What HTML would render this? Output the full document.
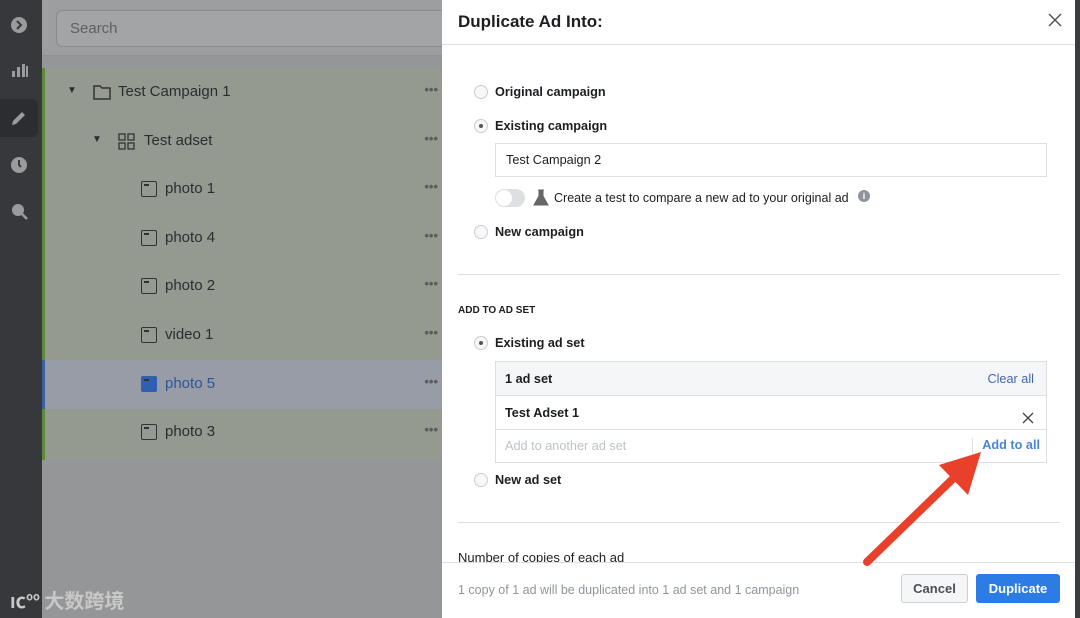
<!DOCTYPE html>
<html><head><meta charset="utf-8"><style>
*{box-sizing:border-box;margin:0;padding:0}
body{width:1080px;height:618px;overflow:hidden;position:relative;font-family:"Liberation Sans",Helvetica,Arial,sans-serif;background:#959697}
.abs{position:absolute}
.side{left:0;top:0;width:42px;height:618px;background:#36383b}
.main{left:42px;top:0;width:400px;height:618px;background:#959697}
.search{left:42px;top:0;width:400px;height:56px;background:#9d9e9f;border-bottom:1px solid #909192}
.sbox{left:56px;top:10px;width:400px;height:37px;border:1px solid #8a8b8c;border-radius:6px;background:#a3a4a5;color:#5e6062;font-size:15px;padding:9px 13px}
.tree{left:42px;top:68px;width:400px;height:392px;background:#959a91;border-left:3px solid #5c8a3a}
.row{position:absolute;left:0;width:397px;height:49px;font-size:15px;color:#2b2d2f}
.row span{position:absolute;top:15px}
.dots{position:absolute;right:4px;top:14px;color:#5a5c5e;font-size:13px;letter-spacing:0}
.ic{position:absolute;top:16px;width:16px;height:16px;border:1.5px solid #333;border-radius:2px}
.ic:after{content:"";position:absolute;left:2px;top:2px;width:5px;height:1.5px;background:#333}
.modal{left:442px;top:0;width:633px;height:618px;background:#fff}
.rb{position:absolute;width:14px;height:14px;border:1px solid #c9ccd1;border-radius:50%;background:#f6f7f9}
.rb.on:after{content:"";position:absolute;left:4px;top:4px;width:4px;height:4px;border-radius:50%;background:#555}
.lbl{position:absolute;font-size:12.7px;font-weight:bold;color:#1c1e21}
.hr{position:absolute;height:1px;background:#dddfe2}
</style></head><body>
<div class="abs side"></div>
<svg class="abs" style="left:10px;top:16px" width="20" height="210" viewBox="0 0 20 210">
<circle cx="9" cy="9" r="8" fill="#9a9b9c"/><path d="M7 5l4 4-4 4" stroke="#36383b" stroke-width="2" fill="none"/>
<rect x="2" y="55" width="3" height="6" fill="#9a9b9c"/><rect x="7" y="51" width="3" height="10" fill="#9a9b9c"/><rect x="12" y="48" width="3" height="13" fill="#9a9b9c"/><rect x="16" y="50" width="2" height="11" fill="#9a9b9c"/>
<circle cx="9" cy="149" r="8" fill="#9a9b9c"/><path d="M9 144v5l2 2" stroke="#36383b" stroke-width="2" fill="none"/>
<circle cx="8" cy="194" r="6" fill="#9a9b9c"/><path d="M12 198l5 5" stroke="#9a9b9c" stroke-width="2.5"/>
</svg>
<div class="abs" style="left:0;top:99px;width:38px;height:38px;background:#2b2d30;border-radius:0 6px 6px 0"></div>
<svg class="abs" style="left:10px;top:109px" width="18" height="18"><path d="M2 16l1-4 9-9 3 3-9 9z" fill="#9a9b9c"/></svg>
<div class="abs main"></div>
<div class="abs search"></div>
<div class="abs sbox">Search</div>
<div class="abs tree">
<div class="row" style="top:0"><span style="left:22px;font-size:10px;top:17px">▼</span><svg style="position:absolute;left:48px;top:16px" width="18" height="16"><path d="M1 2h6l2 2h8v11H1z" fill="none" stroke="#333" stroke-width="1.5"/></svg><span style="left:73px">Test Campaign 1</span><b class="dots">•••</b></div>
<div class="row" style="top:49px"><span style="left:47px;font-size:10px;top:17px">▼</span><svg style="position:absolute;left:73px;top:16px" width="18" height="18"><g fill="none" stroke="#333" stroke-width="1.3"><rect x="1" y="1" width="6" height="6"/><rect x="10" y="1" width="6" height="6"/><rect x="1" y="10" width="6" height="6"/><rect x="10" y="10" width="6" height="6"/></g></svg><span style="left:99px">Test adset</span><b class="dots">•••</b></div>
<div class="row" style="top:97px"><i class="ic" style="left:96px"></i><span style="left:120px">photo 1</span><b class="dots">•••</b></div>
<div class="row" style="top:146px"><i class="ic" style="left:96px"></i><span style="left:120px">photo 4</span><b class="dots">•••</b></div>
<div class="row" style="top:194px"><i class="ic" style="left:96px"></i><span style="left:120px">photo 2</span><b class="dots">•••</b></div>
<div class="row" style="top:243px"><i class="ic" style="left:96px"></i><span style="left:120px">video 1</span><b class="dots">•••</b></div>
<div class="row" style="top:292px;background:#979ca6;left:-3px;width:400px;border-left:3px solid #3d5f9a"><i class="ic" style="left:96px;background:#2f5fb0;border-color:#2f5fb0"></i><span style="left:120px;color:#2f5598">photo 5</span><b class="dots">•••</b></div>
<div class="row" style="top:340px"><i class="ic" style="left:96px"></i><span style="left:120px">photo 3</span><b class="dots">•••</b></div>
</div>
<div class="abs" style="left:10px;top:585px;color:#c8c8c8;font-size:20px;font-family:'Noto Sans CJK SC',sans-serif;font-weight:bold">ıc<sup style="font-size:11px">oo</sup> 大数跨境</div>
<div class="abs" style="left:1075px;top:0;width:5px;height:618px;background:#3a3b3c"></div>
<div class="abs modal">
<div style="position:absolute;left:16px;top:12px;font-size:17px;font-weight:bold;color:#1c1e21">Duplicate Ad Into:</div>
<svg style="position:absolute;left:606px;top:13px" width="14" height="14"><path d="M1 1l12 12M13 1L1 13" stroke="#555" stroke-width="1.5"/></svg>
<div class="hr" style="left:0;top:44px;width:633px"></div>
<i class="rb" style="left:32px;top:85px"></i><div class="lbl" style="left:53px;top:85px">Original campaign</div>
<i class="rb on" style="left:32px;top:119px"></i><div class="lbl" style="left:53px;top:119px">Existing campaign</div>
<div style="position:absolute;left:53px;top:143px;width:552px;height:34px;border:1px solid #dddfe2;font-size:12.7px;color:#1c1e21;padding:9px 10px">Test Campaign 2</div>
<div style="position:absolute;left:53px;top:189px;width:30px;height:18px;border-radius:9px;background:#dddfe2"><div style="position:absolute;left:1px;top:1px;width:16px;height:16px;border-radius:50%;background:#fff"></div></div>
<svg style="position:absolute;left:91px;top:189px" width="16" height="18"><path d="M5 1h6M6 1v6L1 16h14L10 7V1" fill="#666" stroke="#666"/></svg>
<div style="position:absolute;left:112px;top:191px;font-size:12.5px;color:#1c1e21">Create a test to compare a new ad to your original ad</div>
<div style="position:absolute;left:416px;top:190px;width:12px;height:12px;border-radius:50%;background:#8d949e;color:#fff;font-size:9px;font-weight:bold;text-align:center;line-height:12px">i</div>
<i class="rb" style="left:32px;top:225px"></i><div class="lbl" style="left:53px;top:225px">New campaign</div>
<div class="hr" style="left:16px;top:274px;width:602px"></div>
<div style="position:absolute;left:16px;top:305px;font-size:10px;font-weight:bold;color:#1c1e21">ADD TO AD SET</div>
<i class="rb on" style="left:32px;top:336px"></i><div class="lbl" style="left:53px;top:336px">Existing ad set</div>
<div style="position:absolute;left:53px;top:361px;width:552px;height:102px;border:1px solid #dddfe2">
<div style="height:34px;background:#f5f6f7;border-bottom:1px solid #dddfe2;position:relative"><b style="position:absolute;left:9px;top:10px;font-size:12.7px;color:#1c1e21">1 ad set</b><span style="position:absolute;right:12px;top:10px;font-size:12.7px;color:#4267b2">Clear all</span></div>
<div style="height:34px;border-bottom:1px solid #dddfe2;position:relative"><b style="position:absolute;left:9px;top:10px;font-size:12.7px;color:#1c1e21">Test Adset 1</b><svg style="position:absolute;right:12px;top:16px" width="12" height="12"><path d="M1 1l10 10M11 1L1 11" stroke="#444" stroke-width="1.3"/></svg></div>
<div style="position:relative;height:32px"><span style="position:absolute;left:9px;top:9px;font-size:12.7px;color:#bec3c9">Add to another ad set</span><div style="position:absolute;left:476px;top:8px;width:1px;height:16px;background:#dddfe2"></div><b style="position:absolute;right:6px;top:8px;font-size:12.7px;color:#4a86d0">Add to all</b></div>
</div>
<i class="rb" style="left:32px;top:473px"></i><div class="lbl" style="left:53px;top:473px">New ad set</div>
<div class="hr" style="left:16px;top:522px;width:602px"></div>
<div style="position:absolute;left:16px;top:550px;font-size:13px;color:#1c1e21;height:13px;overflow:hidden">Number of copies of each ad</div>
<div style="position:absolute;left:0;top:562px;width:633px;height:56px;background:#fff;border-top:1px solid #dddfe2"></div>
<div style="position:absolute;left:16px;top:583px;font-size:12.5px;color:#90949c">1 copy of 1 ad will be duplicated into 1 ad set and 1 campaign</div>
<div style="position:absolute;left:459px;top:574px;width:67px;height:29px;border:1px solid #ccd0d5;border-radius:3px;background:#f5f6f7;font-size:13px;font-weight:bold;color:#4b4f56;text-align:center;line-height:27px">Cancel</div>
<div style="position:absolute;left:534px;top:574px;width:84px;height:29px;border-radius:3px;background:#2d7be5;font-size:13px;font-weight:bold;color:#fff;text-align:center;line-height:29px">Duplicate</div>
</div>
<svg class="abs" style="left:855px;top:440px" width="140" height="130"><path d="M12 122L107 30" stroke="#e8402a" stroke-width="8" stroke-linecap="round"/><path d="M126 12L84 25L113 55Z" fill="#e8402a"/></svg>
</body></html>
